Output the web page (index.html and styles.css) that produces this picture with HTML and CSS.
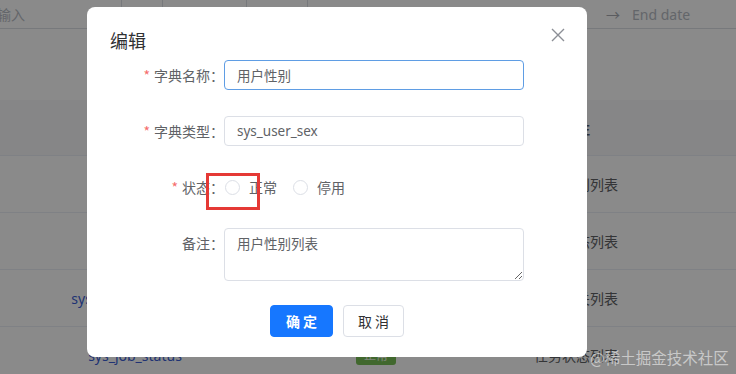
FILE: index.html
```html
<!DOCTYPE html>
<html lang="zh-CN">
<head>
<meta charset="UTF-8">
<meta name="viewport" content="width=device-width, initial-scale=1.0">
<title>编辑字典</title>
<link rel="stylesheet" href="styles.css">
</head>
<body>

<div class="page">
  <div class="search-bar">
    <div class="search-cell cell-a"><span class="placeholder">输入</span></div>
    <div class="search-cell cell-b"></div>
    <div class="search-cell cell-c"></div>
    <div class="search-cell cell-d"></div>
    <div class="search-cell cell-e">
      <span class="placeholder range">→</span>
      <span class="placeholder">End date</span>
    </div>
  </div>

  <div class="toolbar"></div>

  <div class="table">
    <div class="table-row table-head">
      <div></div><div>字典类型</div><div></div><div>状态</div><div></div><div>备注</div><div></div>
    </div>
    <div class="table-row">
      <div></div><div class="link">sys_user_sex</div><div></div><div><span class="tag">正常</span></div><div></div><div>用户性别列表</div><div></div>
    </div>
    <div class="table-row">
      <div></div><div class="link">sys_show_hide</div><div></div><div><span class="tag">正常</span></div><div></div><div>菜单状态列表</div><div></div>
    </div>
    <div class="table-row">
      <div></div><div class="link">sys_normal_disable</div><div></div><div><span class="tag">正常</span></div><div></div><div>系统开关列表</div><div></div>
    </div>
    <div class="table-row">
      <div></div><div class="link">sys_job_status</div><div></div><div><span class="tag">正常</span></div><div></div><div>任务状态列表</div><div></div>
    </div>
  </div>
</div>

<div class="mask"></div>

<div class="dialog">
  <div class="dialog-header">
    <span class="dialog-title">编辑</span>
    <svg class="dialog-close" width="14" height="14" viewBox="0 0 14 14">
      <path d="M1 1 L13 13 M13 1 L1 13" stroke="#8c8f96" stroke-width="1.4" fill="none"/>
    </svg>
  </div>

  <form class="dialog-body">
    <div class="form-item">
      <label class="form-label"><span class="required">*</span>字典名称：</label>
      <input class="form-input is-focus" type="text" value="用户性别">
    </div>
    <div class="form-item">
      <label class="form-label"><span class="required">*</span>字典类型：</label>
      <input class="form-input" type="text" value="sys_user_sex">
    </div>
    <div class="form-item">
      <label class="form-label"><span class="required">*</span>状态：</label>
      <div class="radio-group">
        <span class="radio"><span class="radio-circle"></span>正常</span>
        <span class="radio"><span class="radio-circle"></span>停用</span>
      </div>
    </div>
    <div class="form-item form-item-top">
      <label class="form-label">备注：</label>
      <textarea class="form-textarea">用户性别列表</textarea>
    </div>

    <div class="dialog-footer">
      <button type="button" class="btn btn-primary">确 定</button>
      <button type="button" class="btn">取 消</button>
    </div>
  </form>

  <div class="mark-box"></div>
</div>

<div class="watermark">@稀土掘金技术社区</div>

</body>
</html>
```

FILE: styles.css
```css
body {
  margin: 0;
  font-family: "Noto Sans", "Noto Sans CJK SC", sans-serif;
  font-size: 14px;
  background-color: #fff;
  width: 736px;
  height: 374px;
  overflow: hidden;
  position: relative;
}
.page {
  width: 736px;
}
.search-bar {
  display: flex;
  height: 28px;
  border-bottom: 1px solid #dcdfe6;
}
.search-cell {
  border-right: 1px solid #dcdfe6;
  display: flex;
  align-items: center;
  box-sizing: border-box;
}
.cell-a { width: 122px; }
.cell-b { width: 41px; }
.cell-c { width: 84px; }
.cell-d { width: 61px; }
.cell-e {
  flex: 1;
  border-right: none;
  padding-left: 298px;
  gap: 12px;
}
.placeholder {
  color: #b8bcc4;
  font-size: 14px;
}
.cell-a .placeholder {
  margin-left: -3px;
}
.range {
  color: #a8abb2;
}
.toolbar {
  height: 71px;
}
.table-row {
  display: grid;
  grid-template-columns: 60px 150px 92px 148px 52px 148px 86px;
  height: 57px;
  border-bottom: 1px solid #ebeef5;
  box-sizing: border-box;
  color: #606266;
}
.table-row > div {
  display: flex;
  align-items: center;
  justify-content: center;
  white-space: nowrap;
}
.table-head {
  height: 56px;
  background-color: #f8f8f9;
  color: #515a6e;
  font-weight: bold;
}
.link {
  color: #3b5fd6;
}
.tag {
  background-color: #78c155;
  color: #e9f6e2;
  font-size: 12px;
  padding: 1px 8px;
  border-radius: 3px;
}
.mask {
  position: absolute;
  left: 0;
  top: 0;
  width: 736px;
  height: 374px;
  background-color: rgba(0, 0, 0, 0.46);
}
.dialog {
  position: absolute;
  left: 87px;
  top: 7px;
  width: 500px;
  height: 350px;
  background-color: #fff;
  border-radius: 8px;
  box-sizing: border-box;
  font-family: "Noto Sans CJK SC", sans-serif;
}
.dialog-header {
  padding: 21px 23px 0 23px;
  height: 45px;
  box-sizing: border-box;
  display: flex;
  justify-content: space-between;
  align-items: center;
}
.dialog-title {
  font-size: 18px;
  line-height: 24px;
  color: #303133;
}
.dialog-close {
  margin-top: -10px;
  margin-right: -1px;
}
.dialog-body {
  padding: 8px 63px 0 0;
}
.form-item {
  display: flex;
  align-items: center;
  margin-bottom: 26px;
}
.form-item-top {
  align-items: flex-start;
  margin-bottom: 24px;
}
.form-label {
  width: 137px;
  text-align: right;
  color: #606266;
  line-height: 30px;
  flex-shrink: 0;
}
.required {
  color: #f56c6c;
  margin-right: 4px;
}
.form-input,
.form-textarea {
  width: 300px;
  height: 30px;
  padding: 0 12px;
  border: 1px solid #dcdfe6;
  border-radius: 4px;
  box-sizing: border-box;
  font-family: "Noto Sans", "Noto Sans CJK SC", sans-serif;
  font-size: 13.5px;
  color: #606266;
  outline: none;
}
.form-input.is-focus {
  border-color: #5f9de4;
}
.form-textarea {
  height: 53px;
  padding: 4px 12px;
  line-height: 22px;
  resize: vertical;
}
.radio-group {
  display: flex;
  align-items: center;
  height: 30px;
  padding-left: 1px;
}
.radio {
  display: flex;
  align-items: center;
  color: #606266;
  margin-right: 16px;
}
.radio-circle {
  width: 15px;
  height: 15px;
  border: 1px solid #dcdfe6;
  border-radius: 50%;
  box-sizing: border-box;
  margin-right: 9px;
}
.dialog-footer {
  display: flex;
  justify-content: center;
  gap: 10px;
  padding-left: 63px;
}
.btn {
  height: 32px;
  width: 61px;
  border: 1px solid #dcdfe6;
  border-radius: 4px;
  background-color: #fff;
  color: #303133;
  font-family: "Noto Sans CJK SC", sans-serif;
  font-size: 14px;
  cursor: pointer;
}
.btn-primary {
  width: 63px;
  background-color: #1677ff;
  border-color: #1677ff;
  color: #fff;
  font-weight: bold;
}
.mark-box {
  position: absolute;
  left: 119px;
  top: 166px;
  width: 54px;
  height: 37px;
  border: 3px solid #e53935;
  box-sizing: border-box;
}
.watermark {
  position: absolute;
  left: 590px;
  top: 346px;
  font-family: "Noto Sans CJK SC", sans-serif;
  font-size: 15.5px;
  color: rgba(255, 255, 255, 0.55);
  white-space: nowrap;
}
```
